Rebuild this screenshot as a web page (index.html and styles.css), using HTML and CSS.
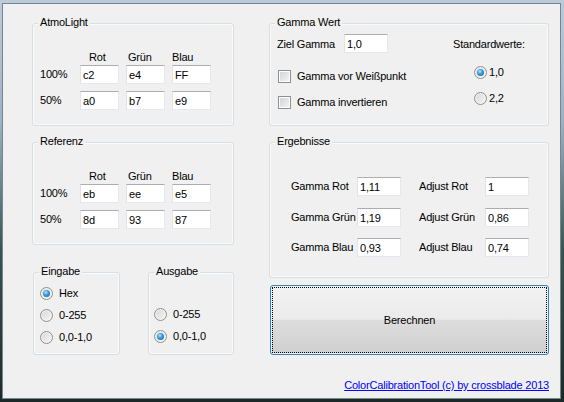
FILE: index.html
```html
<!DOCTYPE html>
<html lang="de">
<head>
  <meta charset="UTF-8" />
  <title>ColorCalibrationTool</title>
  <link rel="stylesheet" href="styles.css">
</head>
<body>
<div class="window">

  <!-- left column: input values -->
  <div class="col col-left">
    <div class="group rgb-group">
      <span class="group-title">AtmoLight</span>
      <div class="rgb-grid">
        <span></span>
        <span class="head head-r">Rot</span>
        <span class="head head-g">Grün</span>
        <span class="head head-b">Blau</span>
        <span class="row-label">100%</span>
        <input class="field" type="text" value="c2">
        <input class="field" type="text" value="e4">
        <input class="field" type="text" value="FF">
        <span class="row-label">50%</span>
        <input class="field" type="text" value="a0">
        <input class="field" type="text" value="b7">
        <input class="field" type="text" value="e9">
      </div>
    </div>

    <div class="group rgb-group">
      <span class="group-title">Referenz</span>
      <div class="rgb-grid">
        <span></span>
        <span class="head head-r">Rot</span>
        <span class="head head-g">Grün</span>
        <span class="head head-b">Blau</span>
        <span class="row-label">100%</span>
        <input class="field" type="text" value="eb">
        <input class="field" type="text" value="ee">
        <input class="field" type="text" value="e5">
        <span class="row-label">50%</span>
        <input class="field" type="text" value="8d">
        <input class="field" type="text" value="93">
        <input class="field" type="text" value="87">
      </div>
    </div>

    <div class="io-row">
      <div class="group io-group input-mode">
        <span class="group-title">Eingabe</span>
        <label class="option"><input type="radio" name="in" checked><span>Hex</span></label>
        <label class="option"><input type="radio" name="in"><span>0-255</span></label>
        <label class="option"><input type="radio" name="in"><span>0,0-1,0</span></label>
      </div>
      <div class="group io-group output-mode">
        <span class="group-title">Ausgabe</span>
        <label class="option"><input type="radio" name="out"><span>0-255</span></label>
        <label class="option"><input type="radio" name="out" checked><span>0,0-1,0</span></label>
      </div>
    </div>
  </div>

  <!-- right column: gamma settings and results -->
  <div class="col col-right">
    <div class="group gamma-group">
      <span class="group-title">Gamma Wert</span>
      <div class="gamma-top">
        <span class="gamma-label">Ziel Gamma</span>
        <input class="field field-wide" type="text" value="1,0">
        <span class="defaults-label">Standardwerte:</span>
      </div>
      <div class="gamma-body">
        <div class="checks">
          <label class="option"><input type="checkbox"><span>Gamma vor Weißpunkt</span></label>
          <label class="option"><input type="checkbox"><span>Gamma invertieren</span></label>
        </div>
        <div class="defaults">
          <label class="option tight"><input type="radio" name="std" checked><span>1,0</span></label>
          <label class="option tight"><input type="radio" name="std"><span>2,2</span></label>
        </div>
      </div>
    </div>

    <div class="group result-group">
      <span class="group-title">Ergebnisse</span>
      <div class="result-grid">
        <span class="row-label">Gamma Rot</span>
        <input class="field field-wide" type="text" value="1,11">
        <span class="row-label">Adjust Rot</span>
        <input class="field field-wide" type="text" value="1">
        <span class="row-label">Gamma Grün</span>
        <input class="field field-wide" type="text" value="1,19">
        <span class="row-label">Adjust Grün</span>
        <input class="field field-wide" type="text" value="0,86">
        <span class="row-label">Gamma Blau</span>
        <input class="field field-wide" type="text" value="0,93">
        <span class="row-label">Adjust Blau</span>
        <input class="field field-wide" type="text" value="0,74">
      </div>
    </div>

    <button class="calc-button" type="button">Berechnen</button>

    <div class="credit"><a href="#">ColorCalibrationTool (c) by crossblade 2013</a></div>
  </div>

</div>
</body>
</html>
```

FILE: styles.css
```css
* {
  box-sizing: border-box;
}
body {
  margin: 0;
  width: 564px;
  height: 402px;
  overflow: hidden;
  font-family: "Liberation Sans", Arial, sans-serif;
  font-size: 11px;
  letter-spacing: -0.2px;
  color: #000;
  background: linear-gradient(180deg, #bccbd9 0%, #9fb2c2 30%, #3b5452 62%, #1c2929 100%);
}
.window {
  display: flex;
  gap: 35px;
  margin: 4px 4px 4px 3px;
  height: 394px;
  padding: 19px 11px 0 29px;
  background: #f0f0f0;
  box-shadow: 0 0 0 1px #77858f;
}
.col-left {
  width: 202px;
}
.col-right {
  width: 280px;
}

/* group boxes */
.group {
  position: relative;
  border: 1px solid #d5dfe5;
  border-radius: 3px;
  box-shadow: inset 0 0 0 1px #fafafa;
}
.group-title {
  position: absolute;
  top: -8px;
  left: 5px;
  padding: 0 2px;
  line-height: 13px;
  background: #f0f0f0;
  white-space: nowrap;
}

/* text boxes */
.field {
  width: 39px;
  height: 19px;
  margin: 0;
  padding: 0 2px;
  font: inherit;
  letter-spacing: inherit;
  color: #000;
  background: #fff;
  border: 1px solid;
  border-color: #abadb3 #e3e9ef #e3e9ef #e2e3ea;
  outline: none;
}
.field-wide {
  width: 44px;
}

.row-label {
  line-height: 19px;
  white-space: nowrap;
}

/* AtmoLight / Referenz */
.rgb-group {
  height: 103px;
  padding: 26px 0 0 7px;
}
.rgb-group + .rgb-group {
  margin-top: 16px;
}
.rgb-grid {
  display: grid;
  grid-template-columns: 33px 39px 39px 39px;
  grid-template-rows: 15px 26px 26px;
  column-gap: 7px;
  align-items: start;
}
.head {
  line-height: 15px;
}
.head-r { padding-left: 9px; }
.head-g { padding-left: 2px; }

/* radio / checkbox rows */
.option {
  display: flex;
  align-items: center;
  gap: 6px;
  height: 15px;
  line-height: 15px;
  white-space: nowrap;
}
.option.tight {
  gap: 2px;
}
.option input {
  appearance: none;
  -webkit-appearance: none;
  flex: none;
  width: 13px;
  height: 13px;
  margin: 0;
  border: 1px solid #8e8f8f;
  background: linear-gradient(135deg, #d6d6d6, #f7f7f7);
  box-shadow: inset 0 0 0 1px #f4f4f4;
}
.option input[type="radio"] {
  border-radius: 50%;
  position: relative;
}
.option input[type="radio"]:checked::after {
  content: "";
  position: absolute;
  left: 2px;
  top: 2px;
  width: 7px;
  height: 7px;
  border-radius: 50%;
  background: radial-gradient(circle at 40% 35%, #b8e6ff 0%, #3a9ee0 40%, #155a93 100%);
}
.option input[type="checkbox"] {
  border-color: #8f8f8f;
  background: linear-gradient(135deg, #cdd1d6, #f6f6f6);
  box-shadow: inset 0 0 0 1px #fdfdfd;
}

/* Eingabe / Ausgabe */
.io-row {
  display: flex;
  gap: 28px;
  margin-top: 27px;
  padding-left: 1px;
}
.io-group {
  height: 83px;
  display: flex;
  flex-direction: column;
  gap: 7px;
}
.input-mode {
  width: 87px;
  padding: 13px 0 0 6px;
}
.output-mode {
  width: 86px;
  padding: 34px 0 0 5px;
}

/* Gamma Wert */
.gamma-group {
  height: 103px;
  padding: 10px 0 0 7px;
}
.gamma-top {
  display: flex;
  align-items: center;
  height: 19px;
}
.gamma-label {
  width: 67px;
}
.defaults-label {
  margin-left: 65px;
}
.gamma-body {
  display: flex;
}
.checks {
  width: 196px;
  margin: 16px 0 0 1px;
  display: flex;
  flex-direction: column;
  gap: 11px;
}
.defaults {
  margin-top: 12px;
  display: flex;
  flex-direction: column;
  gap: 11px;
}

/* Ergebnisse */
.result-group {
  height: 136px;
  margin-top: 16px;
  padding: 34px 0 0 21px;
}
.result-grid {
  display: grid;
  grid-template-columns: 66px 62px 66px 44px;
  grid-template-rows: 31px 30px 19px;
  align-items: start;
}

/* Berechnen */
.calc-button {
  display: block;
  width: 279px;
  height: 70px;
  margin: 7px 0 0 1px;
  font: inherit;
  letter-spacing: inherit;
  color: #000;
  border: 1px solid #3c7fb1;
  border-radius: 3px;
  background: linear-gradient(180deg, #f2f2f2 0%, #ebebeb 49%, #dddddd 50%, #cfcfcf 100%);
  box-shadow: inset 0 0 0 1px #e6f4fb;
  outline: 1px dotted #000;
  outline-offset: -3px;
}

.credit {
  margin-top: 24px;
  text-align: right;
  line-height: 13px;
}
.credit a {
  color: #0000ff;
  text-decoration: underline;
}
```
